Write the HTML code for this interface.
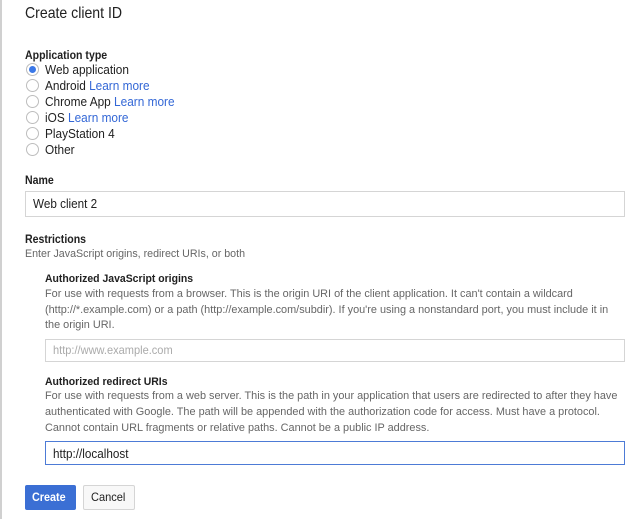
<!DOCTYPE html>
<html><head><style>
body{margin:0;width:635px;height:519px;background:#fff;position:relative;overflow:hidden;font-family:"Liberation Sans",Arial,sans-serif;color:#212121}
.l{position:absolute;white-space:nowrap;transform-origin:0 0}
.b{font-weight:bold}
.g{color:#666}
.a{color:#3367d6}
.r{position:absolute;left:26px;width:11px;height:11px;border:1px solid #bdbdbd;border-radius:50%;background:#fff}
.in{position:absolute;border:1px solid #d5d5d5;box-sizing:border-box;background:#fff}
</style></head><body>
<div style="position:absolute;left:0;top:0;width:2px;height:519px;background:#d0d0d0"></div>
<div class="l" style="left:25px;top:5px;font-size:16px;transform:scaleX(.88)">Create client ID</div>
<div class="l b" style="left:25px;top:48px;font-size:12px;transform:scaleX(.88)">Application type</div>
<div class="r" style="top:63px;border-color:#bdbdbd"><div style="position:absolute;left:2px;top:2px;width:7px;height:7px;border-radius:50%;background:#3b78e7"></div></div>
<div class="r" style="top:79px"></div>
<div class="r" style="top:95px"></div>
<div class="r" style="top:111px"></div>
<div class="r" style="top:127px"></div>
<div class="r" style="top:143px"></div>
<div class="l" style="left:45px;top:62px;font-size:13px;transform:scaleX(.91)">Web application</div>
<div class="l" style="left:45px;top:78px;font-size:13px;transform:scaleX(.91)">Android <span class="a">Learn more</span></div>
<div class="l" style="left:45px;top:94px;font-size:13px;transform:scaleX(.91)">Chrome App <span class="a">Learn more</span></div>
<div class="l" style="left:45px;top:110px;font-size:13px;transform:scaleX(.91)">iOS <span class="a">Learn more</span></div>
<div class="l" style="left:45px;top:126px;font-size:13px;transform:scaleX(.91)">PlayStation 4</div>
<div class="l" style="left:45px;top:142px;font-size:13px;transform:scaleX(.91)">Other</div>
<div class="l b" style="left:25px;top:173px;font-size:12px;transform:scaleX(.88)">Name</div>
<div class="in" style="left:25px;top:191px;width:600px;height:26px"></div>
<div class="l" style="left:33px;top:196px;font-size:13px;transform:scaleX(.9)">Web client 2</div>
<div class="l b" style="left:25px;top:232px;font-size:12px;transform:scaleX(.88)">Restrictions</div>
<div class="l g" style="left:25px;top:248px;font-size:11px;transform:scaleX(.97)">Enter JavaScript origins, redirect URIs, or both</div>
<div class="l b" style="left:45px;top:273px;font-size:11px;transform:scaleX(.95)">Authorized JavaScript origins</div>
<div class="l g" style="left:45px;top:288px;font-size:11px;transform:scaleX(.99)">For use with requests from a browser. This is the origin URI of the client application. It can't contain a wildcard</div>
<div class="l g" style="left:45px;top:304px;font-size:11px;transform:scaleX(.99)">(http://*.example.com) or a path (http://example.com/subdir). If you're using a nonstandard port, you must include it in</div>
<div class="l g" style="left:45px;top:319px;font-size:11px;transform:scaleX(.99)">the origin URI.</div>
<div class="in" style="left:45px;top:339px;width:580px;height:23px"></div>
<div class="l" style="left:53px;top:343px;font-size:12px;color:#aaa;transform:scaleX(.92)">http://www.example.com</div>
<div class="l b" style="left:45px;top:376px;font-size:11px;transform:scaleX(.95)">Authorized redirect URIs</div>
<div class="l g" style="left:45px;top:390px;font-size:11px;transform:scaleX(.99)">For use with requests from a web server. This is the path in your application that users are redirected to after they have</div>
<div class="l g" style="left:45px;top:406px;font-size:11px;transform:scaleX(.99)">authenticated with Google. The path will be appended with the authorization code for access. Must have a protocol.</div>
<div class="l g" style="left:45px;top:422px;font-size:11px;transform:scaleX(.99)">Cannot contain URL fragments or relative paths. Cannot be a public IP address.</div>
<div class="in" style="left:45px;top:441px;width:580px;height:24px;border-color:#4d7bd6"></div>
<div class="l" style="left:53px;top:446px;font-size:13px;transform:scaleX(.9)">http://localhost</div>
<div style="position:absolute;left:25px;top:485px;width:51px;height:25px;background:#3b6fd4;border-radius:2px"></div>
<div class="l b" style="left:32px;top:490px;font-size:12px;color:#fff;transform:scaleX(.9)">Create</div>
<div style="position:absolute;left:83px;top:485px;width:52px;height:25px;box-sizing:border-box;border:1px solid #d5d5d5;border-radius:2px;background:#f8f8f8"></div>
<div class="l" style="left:91px;top:490px;font-size:12px;transform:scaleX(.92)">Cancel</div>
</body></html>
